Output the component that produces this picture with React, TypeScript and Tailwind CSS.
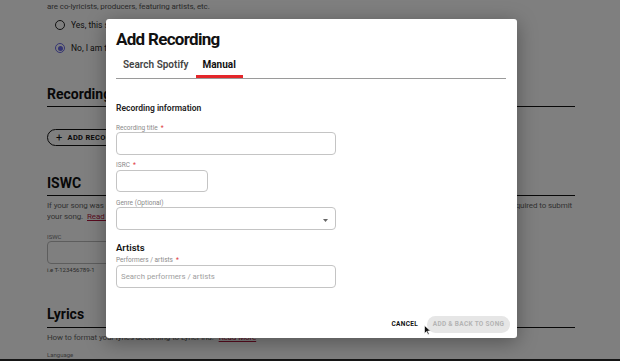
import React from 'react';

const font = { fontFamily: 'Roboto, "Liberation Sans", sans-serif' };

const Label: React.FC<{ text: string; required?: boolean }> = ({ text, required }) => (
  <div className="text-[6.5px] leading-[8px] text-[#8a8a8a]">
    {text}
    {required && <span className="ml-[3px] text-[#e0393e]">*</span>}
  </div>
);

// page behind the dialog; text hidden by the dialog is clipped at its left edge
const Background: React.FC = () => (
  <div className="flex h-[359px] flex-col bg-white px-[47px] text-[#111]">
    <div className="w-[528px]">
      <p className="pt-[1px] text-[8px] leading-[12px] tracking-[-0.1px] text-[#555]">
        are co-lyricists, producers, featuring artists, etc.
      </p>
      <div className="ml-[8px] mt-[5px] flex h-[14px] items-center gap-[6px] text-[8.5px] text-[#222]">
        <span className="h-[10px] w-[10px] shrink-0 rounded-full border border-[#222]" />
        <span className="w-[37px] overflow-hidden whitespace-nowrap">Yes, this song has other writers</span>
      </div>
      <div className="ml-[8px] mt-[9px] flex h-[14px] items-center gap-[6px] text-[8.5px] text-[#222]">
        <span className="flex h-[10px] w-[10px] shrink-0 items-center justify-center rounded-full border border-[#6a6ae6]">
          <span className="h-[5px] w-[5px] rounded-full bg-[#6a6ae6]" />
        </span>
        <span className="w-[37px] overflow-hidden whitespace-nowrap">No, I am the only writer</span>
      </div>
      <h2 className="mt-[30px] text-[14px] font-bold leading-[18px]">Recordings</h2>
      <div className="mt-[3px] h-px bg-[#111]" />
      <div className="mt-[22px] flex h-[17px] w-[120px] items-center gap-[5px] rounded-full border-[1.5px] border-[#111] pl-[8px] text-[7.5px] font-bold tracking-[0.3px]">
        <span className="text-[11px] font-normal leading-none">+</span>
        <span>ADD RECORDING</span>
      </div>
      <h2 className="mt-[28px] text-[14px] font-bold leading-[18px]">ISWC</h2>
      <div className="mt-[3px] h-px bg-[#111]" />
      <div className="mt-[4px] text-[8px] leading-[11px] tracking-[-0.1px] text-[#666]">
        <div className="flex justify-between pr-[3px]">
          <span className="w-[59px] overflow-hidden whitespace-nowrap">If your song was previously registered</span>
          <span>quired to submit</span>
        </div>
        <div className="w-[59px] overflow-hidden whitespace-nowrap">
          your song. <span className="ml-[2px] text-[#b3173f] underline">Read More</span>
        </div>
      </div>
      <div className="mt-[11px] text-[6px] leading-[8px] text-[#777]">ISWC</div>
      <div className="h-[23px] w-[220px] rounded-[4px] border border-[#bbb]" />
      <div className="mt-[2px] text-[6px] leading-[8px] text-[#555]">i.e T-123456789-1</div>
      <h2 className="mt-[31px] text-[14px] font-bold leading-[18px]">Lyrics</h2>
      <div className="mt-[4px] h-px bg-[#111]" />
      <p className="mt-[4px] text-[8px] leading-[11px] tracking-[-0.1px] text-[#666]">
        How to format your lyrics according to LyricFind.{' '}
        <span className="ml-[3px] text-[#b3173f] underline">Read More</span>
      </p>
      <div className="mt-[8px] text-[6px] leading-[8px] text-[#777]">Language</div>
    </div>
  </div>
);

const Modal: React.FC = () => (
  <div className="absolute left-[106px] top-[19px] flex h-[319px] w-[411px] flex-col rounded-[3px] bg-white pl-[10px] pr-[11px] shadow-[0_4px_20px_rgba(0,0,0,0.35)]">
    <h1 className="pt-[10px] text-[17px] font-bold leading-[20px] tracking-[-0.7px] text-[#111]">Add Recording</h1>
    <div className="mt-[7px] flex border-b border-[#9a9a9a]">
      <div className="h-[22px] px-[7px] pt-[3px] text-[10px] font-semibold leading-[12px] text-[#444]">Search Spotify</div>
      <div className="h-[22px] border-b-[3px] border-[#e4262a] px-[7px] pt-[3px] text-[10px] font-bold leading-[12px] text-[#111]">Manual</div>
    </div>
    <div className="mt-[23px] text-[8.5px] font-semibold leading-[12px] text-[#222]">Recording information</div>
    <div className="mt-[10px]"><Label text="Recording title" required /></div>
    <div className="h-[23px] w-[220px] rounded-[4px] border border-[#c4c4c4]" />
    <div className="mt-[6px]"><Label text="ISRC" required /></div>
    <div className="mt-[1px] h-[22px] w-[92px] rounded-[4px] border border-[#c4c4c4]" />
    <div className="mt-[7px]"><Label text="Genre (Optional)" /></div>
    <div className="flex h-[23px] w-[220px] items-center justify-end rounded-[4px] border border-[#c4c4c4] pr-[7px]">
      <svg width="5" height="3" viewBox="0 0 5 3" className="mt-[4px]">
        <path d="M0 0h5L2.5 3z" fill="#666" />
      </svg>
    </div>
    <div className="mt-[12px] text-[9.5px] font-semibold leading-[12px] text-[#111]">Artists</div>
    <div className="mt-[2px]"><Label text="Performers / artists" required /></div>
    <div className="mt-[1px] flex h-[23px] w-[220px] items-center rounded-[4px] border border-[#c4c4c4] pl-[4px] text-[7.8px] text-[#a0a0a0]">
      Search performers / artists
    </div>
    <div className="-mr-[4px] mt-[28px] flex items-center justify-end gap-[9px]">
      <span className="text-[6.5px] font-bold tracking-[0.3px] text-[#111]">CANCEL</span>
      <span className="flex h-[17px] w-[83px] items-center justify-center rounded-full bg-[#e6e6e6] text-[6.5px] font-bold tracking-[0.3px] text-[#b4b4b4]">
        ADD &amp; BACK TO SONG
      </span>
    </div>
  </div>
);

export default function App() {
  return (
    <div className="relative h-[361px] w-[620px] overflow-hidden" style={font}>
      <Background />
      <div className="h-[2px] bg-[#2b2b2b]" />
      <div className="absolute inset-0 bg-black/50" />
      <Modal />
      <svg className="absolute left-[424px] top-[325px]" width="7" height="10" viewBox="0 0 7 10">
        <path d="M0.5 0.5v8l2-2 1.5 3 1.2-0.6-1.5-2.9h2.8z" fill="#111" stroke="#fff" strokeWidth="0.6" />
      </svg>
    </div>
  );
}
